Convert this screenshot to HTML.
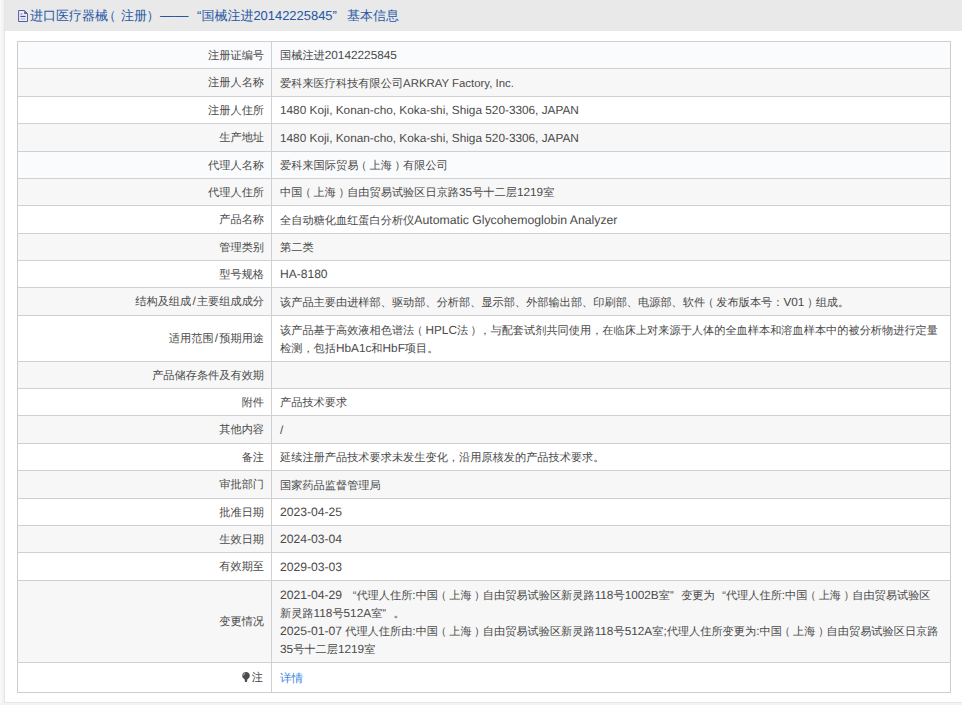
<!DOCTYPE html>
<html><head><meta charset="utf-8"><style>
html,body{margin:0;padding:0;}
body{text-rendering:geometricPrecision;width:962px;height:705px;overflow:hidden;background:#f3f3f3;font-family:"Liberation Sans",sans-serif;position:relative;}
.box{position:absolute;left:4px;top:-1px;width:980px;height:702px;background:#fff;border:1px solid #e6e6e6;}
.lstrip{position:absolute;left:0;top:0;width:4px;height:703px;background:linear-gradient(to right,#fafafa,#f4f4f4 60%,#efefef);}
.hd{position:absolute;left:0;top:0;right:0;height:31px;background:#e9e9e9;}
.title{position:absolute;left:25px;top:7px;font-size:13px;line-height:18px;color:#2657a5;white-space:nowrap;}
.dash{font-size:14.2px;}
.title .e{font-size:12.95px !important;}
.title .ql{width:13px;}.title .qr{width:14.5px;}
.title .pl{left:-5px;}.title .pr{left:-0.5px;}
.tbl{position:absolute;left:17px;top:41px;width:932px;border:1px solid #cdcdcd;border-top:none;}
.r{position:relative;border-top:1px solid #d0d0d2;}
.r.g{background:#f7f7f7;}
.r.w{background:#fff;}
.r.b{background:#fafbfd;}
.l{position:absolute;left:0;top:0;bottom:0;width:254px;border-right:1px solid #d0d0d2;display:flex;align-items:center;justify-content:flex-end;padding-right:7px;box-sizing:border-box;font-size:11.2px;color:#4a4a4a;white-space:nowrap;}
.l>span,.v>div{position:relative;top:1px;}
.v{position:absolute;left:262px;top:0;bottom:0;right:0;display:flex;align-items:center;font-size:11.2px;color:#4a4a4a;line-height:18px;white-space:nowrap;}
.e{font-size:11.8px;line-height:0;}
.l .e{margin:0 1.2px;}
a{color:#3a86de;font-size:11.6px;}
.last .l>span{margin-right:1px;}
.pl{position:relative;left:-2.5px;}.pr{position:relative;left:2.5px;}
.ql,.qr{display:inline-block;width:11.2px;}.ql{text-align:right}.qr{text-align:left}
.doc{position:absolute;left:-14px;top:1px;}
.bulb{display:inline-block;vertical-align:-1px;margin-right:2px;}
.last .l>span,.last .v>div{top:1px;}
</style></head><body>
<div class="lstrip"></div>
<div class="box">
<div class="hd"><div class="title"><svg class="doc" width="14" height="16" viewBox="0 0 14 16"><path d="M2.6 2.5 H8.4 L11.5 5.6 V13.5 H2.6 Z" fill="#ebebfb" stroke="#525e9e" stroke-width="1"/><path d="M8.2 2.5 L11.5 5.8 V6 H8.2 Z" fill="#55629f"/><rect x="4.6" y="5.4" width="1.8" height="1.2" fill="#8a8a9a"/><rect x="4.4" y="7.9" width="5.2" height="1.1" fill="#3e4f8f"/><rect x="4.8" y="10.2" width="4.6" height="1.4" fill="#b9c0d9"/></svg>进口医疗器械<span class="pl">（</span>注册<span class="pr">）</span><span class="dash">——</span><span class="ql">“</span>国械注进<span class="e">20142225845</span><span class="qr">”</span>基本信息</div></div>
</div>
<div class="tbl">
<div class="r b" style="height:26px"><div class="l"><span>注册证编号</span></div><div class="v"><div>国械注进<span class="e">20142225845</span></div></div></div>
<div class="r g" style="height:27px"><div class="l"><span>注册人名称</span></div><div class="v"><div>爱科来医疗科技有限公司<span class="e" style="font-size:11.4px">ARKRAY Factory, Inc.</span></div></div></div>
<div class="r w" style="height:26px"><div class="l"><span>注册人住所</span></div><div class="v"><div><span class="e">1480 Koji, Konan-cho, Koka-shi, Shiga 520-3306, JAPAN</span></div></div></div>
<div class="r g" style="height:27px"><div class="l"><span>生产地址</span></div><div class="v"><div><span class="e">1480 Koji, Konan-cho, Koka-shi, Shiga 520-3306, JAPAN</span></div></div></div>
<div class="r b" style="height:26px"><div class="l"><span>代理人名称</span></div><div class="v"><div>爱科来国际贸易<span class="pl">（</span>上海<span class="pr">）</span>有限公司</div></div></div>
<div class="r g" style="height:26px"><div class="l"><span>代理人住所</span></div><div class="v"><div>中国<span class="pl">（</span>上海<span class="pr">）</span>自由贸易试验区日京路<span class="e">35</span>号十二层<span class="e">1219</span>室</div></div></div>
<div class="r w" style="height:27px"><div class="l"><span>产品名称</span></div><div class="v"><div>全自动糖化血红蛋白分析仪<span class="e" style="font-size:12.27px">Automatic Glycohemoglobin Analyzer</span></div></div></div>
<div class="r g" style="height:26px"><div class="l"><span>管理类别</span></div><div class="v"><div>第二类</div></div></div>
<div class="r w" style="height:26px"><div class="l"><span>型号规格</span></div><div class="v"><div><span class="e" style="font-size:12.05px">HA-8180</span></div></div></div>
<div class="r g" style="height:27px"><div class="l"><span>结构及组成<span class="e">/</span>主要组成成分</span></div><div class="v"><div>该产品主要由进样部、驱动部、分析部、显示部、外部输出部、印刷部、电源部、软件<span class="pl">（</span>发布版本号：<span class="e">V01</span><span class="pr">）</span>组成。</div></div></div>
<div class="r w" style="height:45px"><div class="l"><span>适用范围<span class="e">/</span>预期用途</span></div><div class="v"><div>该产品基于高效液相色谱法<span class="pl">（</span><span class="e">HPLC</span>法<span class="pr">）</span>，与配套试剂共同使用，在临床上对来源于人体的全血样本和溶血样本中的被分析物进行定量<br>检测，包括<span class="e">HbA1c</span>和<span class="e">HbF</span>项目。</div></div></div>
<div class="r g" style="height:26px"><div class="l"><span>产品储存条件及有效期</span></div><div class="v"><div></div></div></div>
<div class="r w" style="height:26px"><div class="l"><span>附件</span></div><div class="v"><div>产品技术要求</div></div></div>
<div class="r g" style="height:27px"><div class="l"><span>其他内容</span></div><div class="v"><div><span class="e">/</span></div></div></div>
<div class="r w" style="height:26px"><div class="l"><span>备注</span></div><div class="v"><div>延续注册产品技术要求未发生变化，沿用原核发的产品技术要求。</div></div></div>
<div class="r g" style="height:27px"><div class="l"><span>审批部门</span></div><div class="v"><div>国家药品监督管理局</div></div></div>
<div class="r w" style="height:26px"><div class="l"><span>批准日期</span></div><div class="v"><div><span class="e" style="font-size:12.15px">2023-04-25</span></div></div></div>
<div class="r g" style="height:26px"><div class="l"><span>生效日期</span></div><div class="v"><div><span class="e" style="font-size:12.15px">2024-03-04</span></div></div></div>
<div class="r w" style="height:27px"><div class="l"><span>有效期至</span></div><div class="v"><div><span class="e" style="font-size:12.15px">2029-03-03</span></div></div></div>
<div class="r g" style="height:81px"><div class="l"><span>变更情况</span></div><div class="v"><div><span class="e" style="font-size:12.15px">2021-04-29</span> <span class="ql">“</span>代理人住所<span class="e">:</span>中国<span class="pl">（</span>上海<span class="pr">）</span>自由贸易试验区新灵路<span class="e">118</span>号<span class="e">1002B</span>室<span class="qr">”</span>变更为<span class="ql">“</span>代理人住所<span class="e">:</span>中国<span class="pl">（</span>上海<span class="pr">）</span>自由贸易试验区<br>新灵路<span class="e">118</span>号<span class="e">512A</span>室<span class="qr">”</span>。<br><span class="e" style="font-size:12.15px">2025-01-07</span> 代理人住所由<span class="e">:</span>中国<span class="pl">（</span>上海<span class="pr">）</span>自由贸易试验区新灵路<span class="e">118</span>号<span class="e">512A</span>室<span class="e">;</span>代理人住所变更为<span class="e">:</span>中国<span class="pl">（</span>上海<span class="pr">）</span>自由贸易试验区日京路<br><span class="e">35</span>号十二层<span class="e">1219</span>室</div></div></div>
<div class="r w last" style="height:29px"><div class="l"><span><svg class="bulb" width="8" height="10" viewBox="0 0 8 10"><path d="M4 0.1 C6.1 0.1 7.8 1.7 7.8 3.8 C7.8 5.4 6.8 6.5 5.4 7.3 L4.9 9.9 H3.1 L2.6 7.3 C1.2 6.5 0.2 5.4 0.2 3.8 C0.2 1.7 1.9 0.1 4 0.1 Z" fill="#4b4b52"/><path d="M1.5 3.4 Q1.8 1.8 3.2 1.3" stroke="#e8e8e8" stroke-width="0.8" fill="none"/></svg>注</span></div><div class="v"><div><a>详情</a></div></div></div>
</div>
</body></html>
